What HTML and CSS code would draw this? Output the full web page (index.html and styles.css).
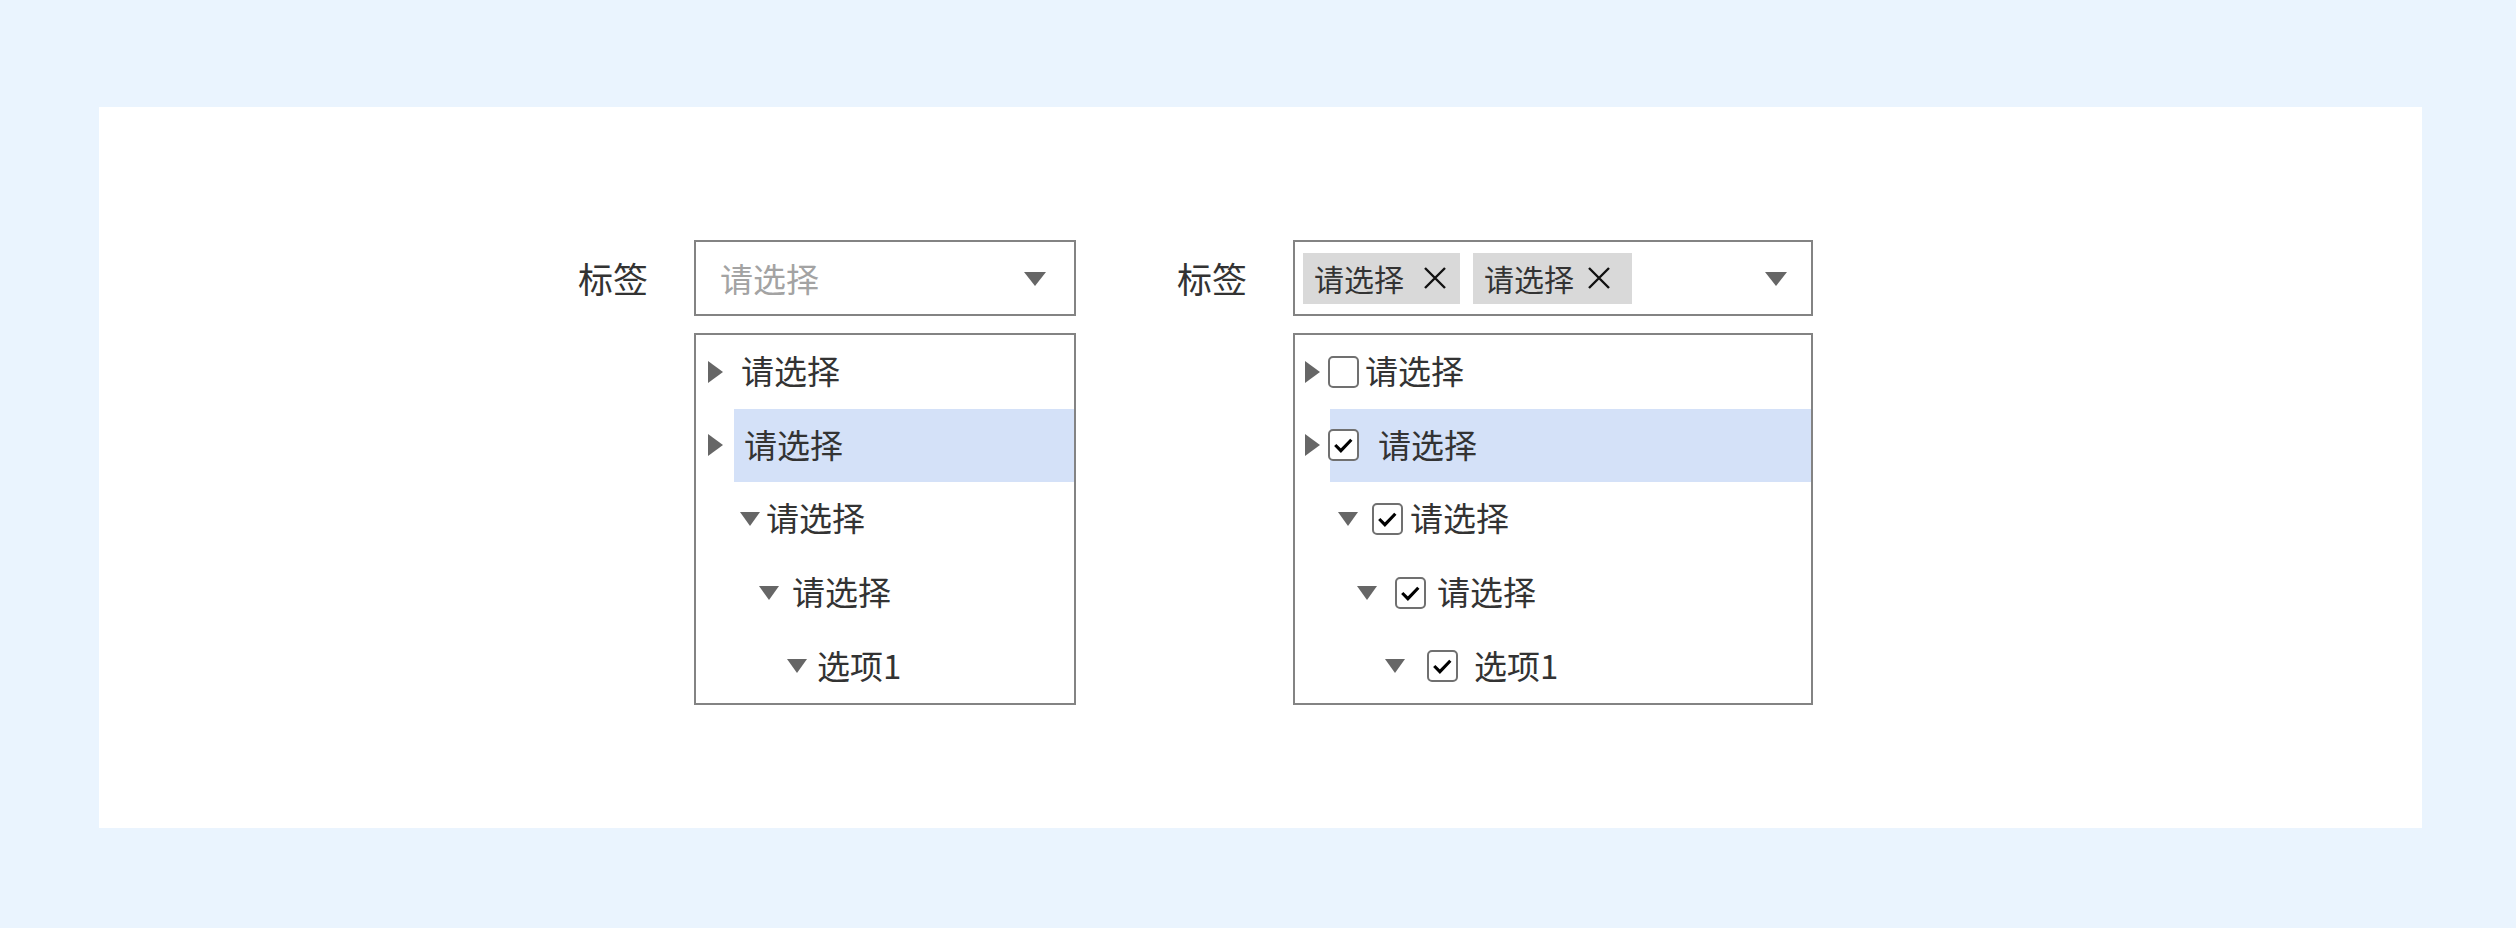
FILE: index.html
```html
<!DOCTYPE html>
<html lang="zh-CN">
<head>
<meta charset="utf-8">
<title>标签选择</title>
<link rel="stylesheet" href="styles.css">
</head>
<body>
<div class="page">
  <div class="panel">
    <div class="field">
      <div class="label">标签</div>
      <div class="col">
        <div class="select select-single">
          <span class="placeholder">请选择</span>
          <span class="arrow"></span>
        </div>
        <div class="tree tree-single">
          <div class="row s1"><span class="caret-r"></span><span class="text">请选择</span></div>
          <div class="row s2"><span class="caret-r"></span><span class="hl"><span class="text">请选择</span></span></div>
          <div class="row s3"><span class="caret-d"></span><span class="text">请选择</span></div>
          <div class="row s4"><span class="caret-d"></span><span class="text">请选择</span></div>
          <div class="row s5"><span class="caret-d"></span><span class="text">选项1</span></div>
        </div>
      </div>
    </div>

    <div class="field">
      <div class="label">标签</div>
      <div class="col">
        <div class="select select-multi">
          <span class="tag tag1"><span class="tag-text">请选择</span><svg class="x" viewBox="0 0 24 22"><path d="M2 1 L22 21 M22 1 L2 21"/></svg></span>
          <span class="tag tag2"><span class="tag-text">请选择</span><svg class="x" viewBox="0 0 24 22"><path d="M2 1 L22 21 M22 1 L2 21"/></svg></span>
          <span class="spacer"></span>
          <span class="arrow"></span>
        </div>
        <div class="tree tree-multi">
          <div class="row m1"><span class="caret-r"></span><span class="cb"></span><span class="text">请选择</span></div>
          <div class="row m2"><span class="caret-r"></span><span class="hl"><span class="cb checked"><svg viewBox="0 0 31 32"><path d="M6 16 L12.5 22.5 L24.5 10"/></svg></span><span class="text">请选择</span></span></div>
          <div class="row m3"><span class="caret-d"></span><span class="cb checked"><svg viewBox="0 0 31 32"><path d="M6 16 L12.5 22.5 L24.5 10"/></svg></span><span class="text">请选择</span></div>
          <div class="row m4"><span class="caret-d"></span><span class="cb checked"><svg viewBox="0 0 31 32"><path d="M6 16 L12.5 22.5 L24.5 10"/></svg></span><span class="text">请选择</span></div>
          <div class="row m5"><span class="caret-d"></span><span class="cb checked"><svg viewBox="0 0 31 32"><path d="M6 16 L12.5 22.5 L24.5 10"/></svg></span><span class="text">选项1</span></div>
        </div>
      </div>
    </div>
  </div>
</div>
</body>
</html>
```

FILE: styles.css
```css
html, body {
  margin: 0;
  padding: 0;
}
body {
  background: #eaf4fe;
  font-family: "Noto Sans CJK SC", "Noto Sans", sans-serif;
  color: #333;
  width: 2516px;
  height: 928px;
  overflow: hidden;
}
.page {
  padding: 107px 0 0 99px;
}
.panel {
  width: 2323px;
  height: 721px;
  box-sizing: border-box;
  background: #fff;
  padding: 133px 0 0 479px;
  display: flex;
  align-items: flex-start;
  gap: 101px;
}
.field {
  display: flex;
  align-items: flex-start;
  gap: 46px;
}
.label {
  font-size: 35px;
  line-height: 76px;
  height: 76px;
  color: #333;
}
.col {
  display: flex;
  flex-direction: column;
  gap: 17px;
}
.select {
  box-sizing: border-box;
  height: 76px;
  border: 2px solid #838383;
  display: flex;
  align-items: center;
}
.select-single {
  width: 382px;
  padding: 0 28px 0 24px;
  justify-content: space-between;
}
.placeholder {
  font-size: 33px;
  color: #a3a3a3;
}
.arrow {
  width: 0;
  height: 0;
  border-left: 11px solid transparent;
  border-right: 11px solid transparent;
  border-top: 14px solid #666;
  margin-top: 2px;
}
.select-multi {
  width: 520px;
  padding: 0 24px 0 8px;
  gap: 13px;
}
.spacer {
  flex: 1;
}
.tag {
  height: 51px;
  background: #d9d9d9;
  display: flex;
  align-items: center;
  box-sizing: border-box;
}
.tag-text {
  font-size: 30px;
  color: #333;
}
.tag1 {
  width: 157px;
  padding-left: 11px;
  gap: 19px;
}
.tag2 {
  width: 159px;
  padding-left: 11px;
  gap: 13px;
}
.x {
  width: 24px;
  height: 22px;
  flex: none;
}
.x path {
  stroke: #111;
  stroke-width: 2.4;
  fill: none;
}
.tree {
  box-sizing: border-box;
  border: 2px solid #838383;
}
.tree-single {
  width: 382px;
}
.tree-multi {
  width: 520px;
}
.row {
  height: 73.6px;
  display: flex;
  align-items: center;
  font-size: 33px;
}
.text {
  line-height: 1;
  position: relative;
  top: -1px;
}
.caret-r {
  flex: none;
  width: 0;
  height: 0;
  border-top: 11px solid transparent;
  border-bottom: 11px solid transparent;
  border-left: 15px solid #666;
}
.caret-d {
  flex: none;
  width: 0;
  height: 0;
  border-left: 10.5px solid transparent;
  border-right: 10.5px solid transparent;
  border-top: 14px solid #666;
}
.hl {
  flex: 1;
  align-self: stretch;
  background: #d4e1f8;
  display: flex;
  align-items: center;
}

/* single tree indents */
.s1 { padding-left: 12px; }
.s1 .text { margin-left: 18px; }
.s2 { padding-left: 12px; }
.s2 .hl { margin-left: 11px; padding-left: 10px; }
.s3 { padding-left: 44px; }
.s3 .text { margin-left: 6px; }
.s4 { padding-left: 63px; }
.s4 .text { margin-left: 13px; }
.s5 { padding-left: 91px; }
.s5 .text { margin-left: 10px; }

/* checkbox */
.cb {
  flex: none;
  box-sizing: border-box;
  width: 31px;
  height: 32px;
  border: 2px solid #707070;
  border-radius: 5px;
  background: #fff;
  display: flex;
}
.cb svg {
  width: 100%;
  height: 100%;
}
.cb svg path {
  fill: none;
  stroke: #000;
  stroke-width: 3.6;
  stroke-linecap: butt;
  stroke-linejoin: miter;
}

/* multi tree indents */
.m1 { padding-left: 10px; }
.m1 .cb { margin-left: 8px; }
.m1 .text { margin-left: 6px; }
.m2 { padding-left: 10px; }
.m2 .hl { margin-left: 10px; }
.m2 .cb { margin-left: -2px; }
.m2 .text { margin-left: 19px; }
.m3 { padding-left: 43px; }
.m3 .cb { margin-left: 14px; }
.m3 .text { margin-left: 7px; }
.m4 { padding-left: 62px; }
.m4 .cb { margin-left: 18px; }
.m4 .text { margin-left: 11px; }
.m5 { padding-left: 90px; }
.m5 .cb { margin-left: 22px; }
.m5 .text { margin-left: 16px; }
```
